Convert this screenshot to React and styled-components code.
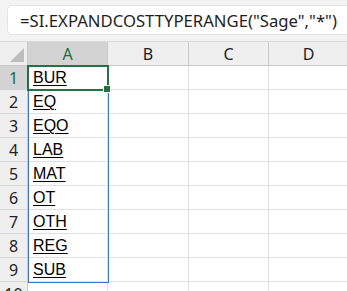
import React from 'react';
import styled, { createGlobalStyle } from 'styled-components';

const GlobalStyle = createGlobalStyle`
	body {
		margin: 0;
		background: #f3f3f3;
		overflow: hidden;
	}
`;

const Page = styled.div`
	width: 347px;
	height: 291px;
	overflow: hidden;
	background: #f3f3f3;
`;

const FormulaArea = styled.div`
	height: 42px;
	padding: 5px 0 0 7px;
	box-sizing: border-box;
	border-bottom: 1px solid #dadada;
`;

const FormulaBox = styled.div`
	height: 30px;
	width: 380px;
	box-sizing: border-box;
	background: #ffffff;
	border: 1px solid #e3e3e3;
	border-radius: 5px;
	padding-left: 12px;
	display: flex;
	align-items: center;
	font-family: 'Noto Sans', sans-serif;
	font-size: 16.7px;
	color: #1f1f1f;
	white-space: nowrap;
`;

const Sheet = styled.div`
	position: relative;
	display: grid;
	grid-template-columns: 28px 80px 81px 80px 80px;
	grid-auto-rows: 24px;
	background: #ffffff;
`;

const Corner = styled.div`
	background: #efefef;
	border-right: 1px solid #c9c9c9;
	border-bottom: 1px solid #c9c9c9;
	position: relative;
	&::after {
		content: '';
		position: absolute;
		right: 3px;
		bottom: 3px;
		border-left: 14px solid transparent;
		border-bottom: 14px solid #bdbdbd;
	}
`;

const ColHead = styled.div`
	background: ${(p) => (p.active ? '#d3d3d3' : '#efefef')};
	color: ${(p) => (p.active ? '#1b6b3f' : '#1f1f1f')};
	border-right: 1px solid #c9c9c9;
	border-bottom: 1px solid ${(p) => (p.active ? '#217346' : '#c9c9c9')};
	display: flex;
	align-items: center;
	justify-content: center;
	font-family: 'Noto Sans', sans-serif;
	font-size: 16px;
`;

const RowHead = styled.div`
	background: ${(p) => (p.active ? '#d3d3d3' : '#efefef')};
	color: ${(p) => (p.active ? '#1b6b3f' : '#1f1f1f')};
	border-right: 1px solid ${(p) => (p.active ? '#217346' : '#c9c9c9')};
	border-bottom: 1px solid #d4d4d4;
	display: flex;
	align-items: center;
	justify-content: center;
	font-family: 'Noto Sans', sans-serif;
	font-size: 16px;
`;

const Cell = styled.div`
	border-right: 1px solid #e1e1e1;
	border-bottom: 1px solid #e1e1e1;
	padding: 1px 0 0 5px;
	display: flex;
	align-items: center;
	font-family: 'Liberation Sans', Arial, sans-serif;
	font-size: 16px;
	color: #000000;
	text-decoration: underline;
	text-underline-offset: 2px;
	text-decoration-thickness: 1px;
`;

const SpillBorder = styled.div`
	position: absolute;
	left: 28px;
	top: 24px;
	width: 81px;
	height: 217px;
	box-sizing: border-box;
	border: 1.5px solid #3b73d9;
	pointer-events: none;
`;

const ActiveCell = styled.div`
	position: absolute;
	left: 27px;
	top: 23px;
	width: 82px;
	height: 26px;
	box-sizing: border-box;
	border: 2px solid #217346;
	pointer-events: none;
	&::after {
		content: '';
		position: absolute;
		right: -4px;
		bottom: -4px;
		width: 6px;
		height: 6px;
		background: #217346;
		border: 1px solid #ffffff;
	}
`;

const values = ['BUR', 'EQ', 'EQO', 'LAB', 'MAT', 'OT', 'OTH', 'REG', 'SUB', ''];
const cols = ['A', 'B', 'C', 'D'];

export default function App() {
	return (
		<Page>
			<GlobalStyle />
			<FormulaArea>
				<FormulaBox>=SI.EXPANDCOSTTYPERANGE("Sage","*")</FormulaBox>
			</FormulaArea>
			<Sheet>
				<Corner />
				{cols.map((c) => (
					<ColHead key={c} active={c === 'A'}>
						{c}
					</ColHead>
				))}
				{values.map((v, i) => (
					<React.Fragment key={i}>
						<RowHead active={i === 0}>{i + 1}</RowHead>
						<Cell>{v}</Cell>
						<Cell />
						<Cell />
						<Cell />
					</React.Fragment>
				))}
				<SpillBorder />
				<ActiveCell />
			</Sheet>
		</Page>
	);
}
